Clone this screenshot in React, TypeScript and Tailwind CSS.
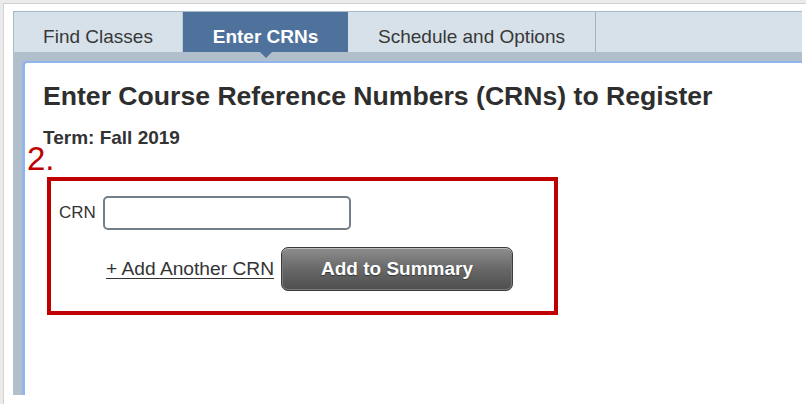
import React from "react";

export default function App() {
  return (
    <div
      className="w-[806px] h-[404px] overflow-hidden bg-[#ebebeb] pl-[3px] pt-[3px]"
      style={{ fontFamily: '"Liberation Sans", Arial, sans-serif' }}
    >
      <div className="h-full border-l border-t border-[#d2d2d2] bg-white pl-[9px] pt-[7px] pr-[4px] flex flex-col">
        {/* Tab bar */}
        <div className="h-[41px] flex bg-[#d6e1ea] border-t border-l border-[#a6b9c8] text-[19px] leading-[22px] text-[#383838]">
          <div className="w-[169px] flex justify-center pt-[14px] border-r border-[#bccbd7]">
            Find Classes
          </div>
          <div className="relative w-[165px] flex justify-center pt-[14px] bg-[#4f729c] text-white font-bold">
            Enter CRNs
            <div className="absolute left-1/2 -translate-x-1/2 bottom-[-6px] w-0 h-0 border-l-[6px] border-r-[6px] border-t-[6px] border-l-transparent border-r-transparent border-t-[#4f729c]" />
          </div>
          <div className="w-[248px] flex justify-center pt-[14px] border-r border-[#9fb3c3]">
            Schedule and Options
          </div>
          <div className="flex-1" />
        </div>

        {/* Frame */}
        <div className="h-[343px] bg-[#b0bfcb] pl-[9px] pt-[9px]">
          <div className="h-full bg-white border-l-[3px] border-t-[2px] border-[#90b4ec] rounded-tl-[5px] pl-[18px] pt-[18px] text-[#333]">
            <div className="text-[26.6px] leading-[31px] font-bold text-[#2e2e2e]">
              Enter Course Reference Numbers (CRNs) to Register
            </div>
            <div className="mt-[15px] text-[19px] leading-[22px] font-bold text-[#333]">
              Term: Fall 2019
            </div>
            <div className="ml-[-16px] mt-[-6px] text-[33px] leading-[32px] text-[#c00000]">
              2.
            </div>
            <div className="ml-[4px] mt-[2px] w-[511px] h-[138px] border-[4px] border-[#c00000] pt-[15px]">
              <div className="flex items-center pl-[8px]">
                <span className="text-[17px] leading-[20px] text-[#333]">CRN</span>
                <div className="ml-[7px] w-[248px] h-[34px] rounded-[5px] border-2 border-[#737e88] bg-white" />
              </div>
              <div className="flex items-center pl-[55px] mt-[17px]">
                <span className="text-[19.2px] leading-[22px] text-[#333] underline underline-offset-[3px] decoration-1">
                  + Add Another CRN
                </span>
                <div className="ml-[7px] w-[232px] h-[44px] rounded-[7px] border border-[#3c3c3c] bg-gradient-to-b from-[#8e8e8e] via-[#686868] to-[#4e4e4e] shadow-[inset_0_1px_0_#bdbdbd,inset_0_0_0_1px_#7a7a7a] flex items-center justify-center">
                  <span className="text-white font-bold text-[19px] leading-[22px] [text-shadow:0_1px_1px_#333]">
                    Add to Summary
                  </span>
                </div>
              </div>
            </div>
          </div>
        </div>
      </div>
    </div>
  );
}
